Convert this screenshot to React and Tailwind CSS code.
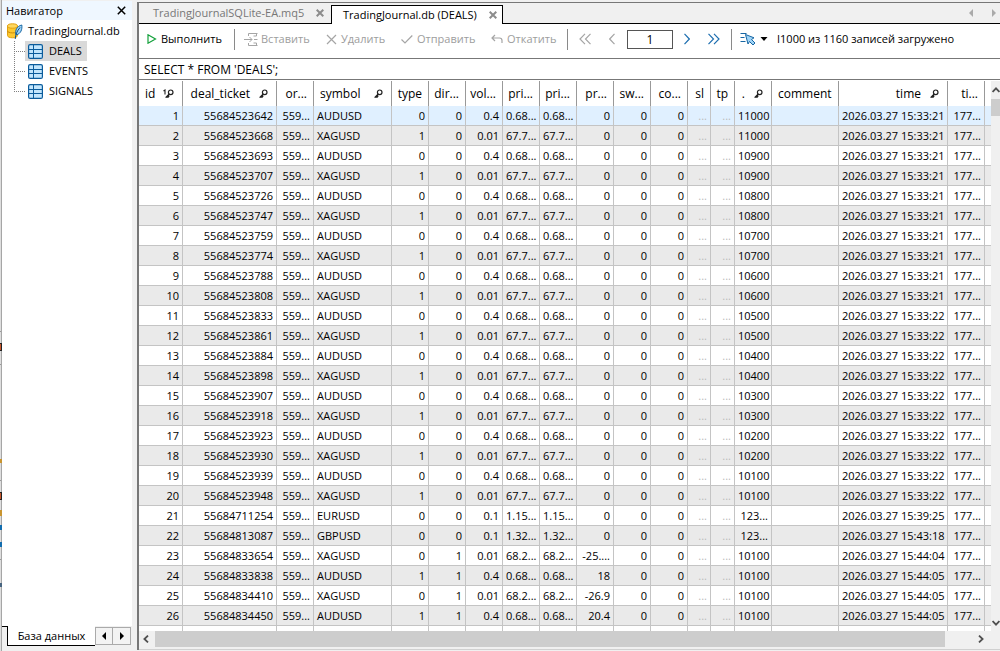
import {useState} from "react"

const TABLES = ["DEALS", "EVENTS", "SIGNALS"]

const COLUMNS = [
    {key: "id", label: "id", width: "w-[44px]", icon: "primary"},
    {key: "ticket", label: "deal_ticket", width: "w-[94px]", icon: "key"},
    {key: "order", label: "or...", width: "w-[37px]"},
    {key: "symbol", label: "symbol", width: "w-[78px]", icon: "key", left: true},
    {key: "type", label: "type", width: "w-[37px]"},
    {key: "direction", label: "dir...", width: "w-[37px]"},
    {key: "volume", label: "vol...", width: "w-[37px]"},
    {key: "priceOpen", label: "pri...", width: "w-[37px]"},
    {key: "priceClose", label: "pri...", width: "w-[37px]"},
    {key: "profit", label: "pr...", width: "w-[37px]"},
    {key: "swap", label: "sw...", width: "w-[37px]"},
    {key: "commission", label: "co...", width: "w-[37px]"},
    {key: "sl", label: "sl", width: "w-[23px]", muted: true},
    {key: "tp", label: "tp", width: "w-[24px]", muted: true},
    {key: "magic", label: ".", width: "w-[37px]", icon: "key"},
    {key: "comment", label: "comment", width: "w-[67px]", left: true},
    {key: "time", label: "time", width: "w-[109px]", icon: "key"},
    {key: "timeMsc", label: "ti...", width: "w-[37px]"},
]

// ticket, symbol, type, direction, volume, price, profit, magic, time
const DEALS = [
    ["55684523642", "AUDUSD", 0, 0, "0.4", "0.68...", "0", "11000", "15:33:21"],
    ["55684523668", "XAGUSD", 1, 0, "0.01", "67.7...", "0", "11000", "15:33:21"],
    ["55684523693", "AUDUSD", 0, 0, "0.4", "0.68...", "0", "10900", "15:33:21"],
    ["55684523707", "XAGUSD", 1, 0, "0.01", "67.7...", "0", "10900", "15:33:21"],
    ["55684523726", "AUDUSD", 0, 0, "0.4", "0.68...", "0", "10800", "15:33:21"],
    ["55684523747", "XAGUSD", 1, 0, "0.01", "67.7...", "0", "10800", "15:33:21"],
    ["55684523759", "AUDUSD", 0, 0, "0.4", "0.68...", "0", "10700", "15:33:21"],
    ["55684523774", "XAGUSD", 1, 0, "0.01", "67.7...", "0", "10700", "15:33:21"],
    ["55684523788", "AUDUSD", 0, 0, "0.4", "0.68...", "0", "10600", "15:33:21"],
    ["55684523808", "XAGUSD", 1, 0, "0.01", "67.7...", "0", "10600", "15:33:21"],
    ["55684523833", "AUDUSD", 0, 0, "0.4", "0.68...", "0", "10500", "15:33:22"],
    ["55684523861", "XAGUSD", 1, 0, "0.01", "67.7...", "0", "10500", "15:33:22"],
    ["55684523884", "AUDUSD", 0, 0, "0.4", "0.68...", "0", "10400", "15:33:22"],
    ["55684523898", "XAGUSD", 1, 0, "0.01", "67.7...", "0", "10400", "15:33:22"],
    ["55684523907", "AUDUSD", 0, 0, "0.4", "0.68...", "0", "10300", "15:33:22"],
    ["55684523918", "XAGUSD", 1, 0, "0.01", "67.7...", "0", "10300", "15:33:22"],
    ["55684523923", "AUDUSD", 0, 0, "0.4", "0.68...", "0", "10200", "15:33:22"],
    ["55684523930", "XAGUSD", 1, 0, "0.01", "67.7...", "0", "10200", "15:33:22"],
    ["55684523939", "AUDUSD", 0, 0, "0.4", "0.68...", "0", "10100", "15:33:22"],
    ["55684523948", "XAGUSD", 1, 0, "0.01", "67.7...", "0", "10100", "15:33:22"],
    ["55684711254", "EURUSD", 0, 0, "0.1", "1.15...", "0", "123...", "15:39:25"],
    ["55684813087", "GBPUSD", 0, 0, "0.1", "1.32...", "0", "123...", "15:43:18"],
    ["55684833654", "XAGUSD", 0, 1, "0.01", "68.2...", "-25....", "10100", "15:44:04"],
    ["55684833838", "AUDUSD", 1, 1, "0.4", "0.68...", "18", "10100", "15:44:05"],
    ["55684834410", "XAGUSD", 0, 1, "0.01", "68.2...", "-26.9", "10100", "15:44:05"],
    ["55684834450", "AUDUSD", 1, 1, "0.4", "0.68...", "20.4", "10100", "15:44:05"],
].map(([ticket, symbol, type, direction, volume, price, profit, magic, time], i) => ({
    id: i + 1,
    ticket,
    order: "559...",
    symbol,
    type,
    direction,
    volume,
    priceOpen: price,
    priceClose: price,
    profit,
    swap: 0,
    commission: 0,
    sl: "...",
    tp: "...",
    magic,
    comment: "",
    time: `2026.03.27 ${time}`,
    timeMsc: "177...",
}))

function KeyIcon({primary}) {
    return (
        <svg width={primary ? 11 : 9} height="10" viewBox={primary ? "-2 0 11 10" : "0 0 9 10"} fill="none" stroke="#222"
             className="shrink-0">
            {primary && <path d="M-1.5 2l1.5-1v4.5" strokeWidth="1.1"/>}
            <circle cx="5.7" cy="3.3" r="2.3" strokeWidth="1.2"/>
            <path d="M4.2 5L.6 8.6M1.2 8.2h2.6M3 6.2l1.4 1.3" strokeWidth="1.2"/>
        </svg>
    )
}

function TableIcon() {
    return (
        <svg width="15" height="15" viewBox="0 0 15 15" fill="none" stroke="#0b5c9c">
            <rect x=".6" y=".6" width="13.8" height="13.8" rx="1.5" fill="#c3e6fd" strokeWidth="1.2"/>
            <path d="M5.5 1v13M1 5.5h13M1 9.5h13" strokeWidth="1"/>
        </svg>
    )
}

function DatabaseIcon() {
    return (
        <svg width="16" height="17" viewBox="0 0 16 17" fill="none">
            <path d="M.5 3v9.5c0 1.4 2.2 2.3 5 2.3s5-.9 5-2.3V3z" fill="#fdc82f" stroke="#e0a010"/>
            <ellipse cx="5.5" cy="3" rx="5" ry="2.2" fill="#ffd75e" stroke="#e0a010"/>
            <path d="M.5 7.8c0 1.3 2.2 2.1 5 2.1s5-.8 5-2.1" stroke="#c98c0c"/>
            <path d="M8.8 11.5C8 7 10 3.2 14.8 2c.6 4.5-1 8.5-5 9.7z" fill="#9fd4f7" stroke="#1766a3"/>
            <path d="M8.2 16C8.5 11.5 10 8 13 4.5" stroke="#0b4f86"/>
        </svg>
    )
}

function TabClose() {
    return (
        <svg width="8" height="8" viewBox="0 0 8 8" stroke="#8c8c8c" strokeWidth="2">
            <path d="M.7.7l6.6 6.6M7.3.7L.7 7.3"/>
        </svg>
    )
}

function Chevron({double, flip, color}) {
    return (
        <svg width={double ? 12 : 6} height="12" viewBox={double ? "0 0 12 12" : "0 0 6 12"} fill="none" stroke={color}
             strokeWidth="1.2" className={flip ? "rotate-180" : ""}>
            <path d={double ? "M.5.8L5.5 6l-5 5.2M6 .8L11 6l-5 5.2" : "M.5.8L5.3 6 .5 11.2"}/>
        </svg>
    )
}

function Arrow({className = "", color = "#000"}) {
    return (
        <svg width="4" height="8" viewBox="0 0 4 8" fill={color} className={className}>
            <path d="M0 0l4 4-4 4z"/>
        </svg>
    )
}

function ScrollArrow({className}) {
    return (
        <svg width="6" height="8" viewBox="0 0 6 8" fill="none" stroke="#505050" strokeWidth="1.8" className={className}>
            <path d="M1 .6L4.6 4 1 7.4"/>
        </svg>
    )
}

function ToolButton({children, label, width, disabled}) {
    return (
        <button
            disabled={disabled}
            className={`flex shrink-0 items-center text-left ${width} ${disabled ? "text-[#9d9d9d]" : "text-black"}`}>
            {children}
            {label}
        </button>
    )
}

function Divider() {
    return <div className="h-[21px] w-px shrink-0 bg-[#8a8a8a]"/>
}

function Toolbar() {
    return (
        <div className="flex h-[35px] shrink-0 items-center overflow-hidden border-b border-[#777] pb-1 pl-2 whitespace-nowrap">
            <ToolButton label="Выполнить" width="w-[87px] gap-[3px]">
                <svg width="11" height="10" viewBox="0 0 11 10" fill="none" stroke="#12a03a" strokeWidth="1.2">
                    <path d="M1 .8L8.5 5 1 9.2z"/>
                </svg>
            </ToolButton>
            <Divider/>
            <ToolButton label="Вставить" width="ml-[9px] w-[82px] gap-[3px]" disabled>
                <svg width="14" height="13" viewBox="0 0 14 13" fill="none" stroke="#a5a5a5">
                    <path d="M0 6.5h8M5.5 4L8 6.5 5.5 9M4.5 3V.5h9M4.5 10v2.5h9M10 6.5h3.5M12.5.5v2.5h-3M12.5 12.5V10h-3"/>
                </svg>
            </ToolButton>
            <ToolButton label="Удалить" width="w-[75px] gap-[3px]" disabled>
                <svg width="12" height="11" viewBox="0 0 12 11" stroke="#a5a5a5" strokeWidth="1.2">
                    <path d="M1 1l9 9M10 1l-9 9"/>
                </svg>
            </ToolButton>
            <ToolButton label="Отправить" width="w-[90px] gap-1" disabled>
                <svg width="12" height="11" viewBox="0 0 12 11" fill="none" stroke="#a5a5a5" strokeWidth="1.2">
                    <path d="M.5 5.5L4 9l7.3-7.5"/>
                </svg>
            </ToolButton>
            <ToolButton label="Откатить" width="w-[76px] gap-1" disabled>
                <svg width="12" height="11" viewBox="0 0 12 11" fill="none" stroke="#a5a5a5" strokeWidth="1.2">
                    <path d="M4 1L1 4l3 3M1 4h7.5q2.5 0 2.5 2.5V9"/>
                </svg>
            </ToolButton>
            <Divider/>
            <button aria-label="Первая страница" className="ml-[11px]" disabled><Chevron double flip color="#a5a5a5"/></button>
            <button aria-label="Предыдущая страница" className="ml-[18px]" disabled><Chevron flip color="#a5a5a5"/></button>
            <input
                aria-label="Страница"
                defaultValue="1"
                className="ml-3 h-[19px] w-[46px] shrink-0 border border-[#555] text-center text-[12px] outline-none"/>
            <button aria-label="Следующая страница" className="ml-[11px]"><Chevron color="#1e6fb0"/></button>
            <button aria-label="Последняя страница" className="ml-[18px]"><Chevron double color="#1e6fb0"/></button>
            <div className="ml-[11px]"><Divider/></div>
            <button aria-label="Выборка" className="ml-2 flex shrink-0 items-center gap-1">
                <svg width="16" height="14" viewBox="0 0 16 14" fill="none" stroke="#1766a3">
                    <path d="M.5 1.5h6M.5 5.5h4M.5 9.5h5"/>
                    <path d="M5.5 2.5l8.5 3.3-2.5 1.7 3.5 3.5-2 2-3.5-3.5L8 12z" fill="#9fd4f7"/>
                </svg>
                <svg width="8" height="4" viewBox="0 0 8 4"><path d="M.5 0h7L4 4z"/></svg>
            </button>
            <span className="ml-[9px]">I1000 из 1160 записей загружено</span>
        </div>
    )
}

function Navigator({selected, onSelect}) {
    return (
        <aside className="flex w-[130px] shrink-0 flex-col">
            <div className="flex h-[19px] shrink-0 items-center justify-between bg-[#eff7ff] pr-[6px] pl-1">
                <span>Навигатор</span>
                <button aria-label="Закрыть">
                    <svg width="9" height="9" viewBox="0 0 9 9" stroke="#000" strokeWidth="1.5">
                        <path d="M.8.8l7.4 7.4M8.2.8L.8 8.2"/>
                    </svg>
                </button>
            </div>
            <div className="flex-1 bg-white pt-px">
                <div className="flex h-5 items-center gap-[5px] pl-[5px] whitespace-nowrap">
                    <DatabaseIcon/>
                    TradingJournal.db
                </div>
                <ul>
                    {TABLES.map((name, i) => (
                        <li key={name} className="flex h-5 pl-3">
                            <svg width="11" height="20" viewBox="0 0 11 20" stroke="#808080" strokeDasharray="1 1"
                                 className="shrink-0">
                                <path d={i === TABLES.length - 1 ? "M.5 0v10M0 10.5h11" : "M.5 0v20M0 10.5h11"}/>
                            </svg>
                            <button
                                onClick={() => onSelect(name)}
                                className={`flex items-center gap-[6px] pr-[5px] pl-[3px] ${selected === name ? "bg-[#d9d9d9]" : ""}`}>
                                <TableIcon/>
                                {name}
                            </button>
                        </li>
                    ))}
                </ul>
            </div>
            <div className="flex h-5 shrink-0 pr-px">
                <div className="h-px w-[5px] bg-black"/>
                <button className="flex-1 border-b border-l border-black bg-white whitespace-nowrap">База данных</button>
                <button aria-label="Назад" className="mt-px flex h-[18px] w-[18px] items-center justify-center border border-[#aaa] bg-[#f3f3f3]">
                    <Arrow className="rotate-180"/>
                </button>
                <button aria-label="Вперёд" className="mt-px flex h-[18px] w-[18px] items-center justify-center border border-l-0 border-[#aaa] bg-[#f3f3f3]">
                    <Arrow/>
                </button>
            </div>
            <div className="h-[5px] shrink-0"/>
        </aside>
    )
}

function DealsTable() {
    return (
        <table className="w-full table-fixed border-separate border-spacing-0 whitespace-nowrap">
            <colgroup>
                {COLUMNS.map((col) => <col key={col.key} className={col.width}/>)}
                <col/>
            </colgroup>
            <thead className="text-[12px]">
            <tr className="h-[25px]">
                {COLUMNS.map((col) => (
                    <th key={col.key} className="border-r border-[#999] p-0 font-normal">
                        <div
                            className={`flex items-center pl-[6px] ${col.left || col.icon === "primary" ? "justify-between" : "justify-end gap-[9px]"} ${col.icon ? "pr-2" : "pr-[6px]"}`}>
                            {col.label}
                            {col.icon && <KeyIcon primary={col.icon === "primary"}/>}
                        </div>
                    </th>
                ))}
                <th/>
            </tr>
            </thead>
            <tbody>
            {DEALS.map((deal, i) => (
                <tr key={deal.id}
                    className={`h-5 ${i === 0 ? "bg-[#e0f0ff]" : i % 2 ? "bg-[#eaeaea]" : "bg-white"}`}>
                    {COLUMNS.map((col) => (
                        <td
                            key={col.key}
                            className={`overflow-hidden border-r border-b border-[#c4c4c4] px-[3px] py-0 leading-[19px] ${col.left ? "text-left" : "text-right"} ${col.muted ? "text-[#bbb]" : ""}`}>
                            {deal[col.key]}
                        </td>
                    ))}
                    <td className="border-b border-[#c4c4c4] p-0"/>
                </tr>
            ))}
            <tr className="h-5">
                {COLUMNS.map((col) => <td key={col.key} className="border-r border-[#c4c4c4] p-0"/>)}
                <td/>
            </tr>
            </tbody>
        </table>
    )
}

export default function App() {
    const [selected, setSelected] = useState("DEALS")
    const [query, setQuery] = useState("SELECT * FROM 'DEALS';")

    return (
        <div className="flex h-screen overflow-hidden bg-[#f0f0f0] font-['Open_Sans','Noto_Sans',sans-serif] text-[11px] leading-4 text-black">
            <svg width="2" height="651" viewBox="0 0 2 651" className="shrink-0">
                <path d="M0 0h1v651H0z" fill="#dedede"/>
                <path d="M1 0h1v651H1z" fill="#a6a6a6"/>
                <path d="M0 331h1v1H0zM0 364h1v1H0zM0 480h1v1H0zM0 559h1v1H0z" fill="#999"/>
                <path d="M0 343h2v8H0zM0 492h2v8H0z" fill="#222"/>
                <path d="M0 344h1v6H0zM0 493h1v6H0z" fill="#c9582c"/>
                <path d="M0 459h2v4H0zM0 510h2v6H0z" fill="#c99530"/>
                <path d="M0 525h2v5H0zM0 542h2v5H0z" fill="#126daf"/>
                <path d="M0 583h2v4H0z" fill="#476480"/>
            </svg>
            <div className="flex pt-px">
                <Navigator selected={selected} onSelect={setSelected}/>
            </div>
            <main className="mt-[2px] mb-px ml-[5px] flex min-w-0 flex-1 flex-col border-t border-l-2 border-[#777]">
                <div className="flex h-[21px] shrink-0 items-stretch">
                    <div className="flex w-[192px] items-center justify-between border-b border-black pr-[7px] pl-[14px] text-[#777]">
                        <span className="whitespace-nowrap">TradingJournalSQLite-EA.mq5</span>
                        <button aria-label="Закрыть вкладку"><TabClose/></button>
                    </div>
                    <div className="mt-[2px] flex w-[172px] items-center justify-between border border-b-0 border-black bg-white pr-[5px] pl-[11px]">
                        <span className="whitespace-nowrap">TradingJournal.db (DEALS)</span>
                        <button aria-label="Закрыть вкладку"><TabClose/></button>
                    </div>
                    <div className="flex flex-1 items-center justify-end gap-[19px] border-b border-black pr-1">
                        <Arrow className="rotate-180" color="#aaa"/>
                        <Arrow color="#aaa"/>
                    </div>
                </div>
                <div className="flex min-h-0 flex-1 flex-col bg-white">
                    <Toolbar/>
                    <input
                        aria-label="SQL запрос"
                        value={query}
                        onChange={(e) => setQuery(e.target.value)}
                        className="mb-px h-[21px] w-full shrink-0 border-b border-[#777] px-[5px] text-[12px] outline-none"/>
                    <div className="flex min-h-0 flex-1">
                        <div className="flex min-w-0 flex-1 flex-col">
                            <div className="min-h-0 flex-1 overflow-hidden">
                                <DealsTable/>
                            </div>
                            <div className="flex h-4 shrink-0 items-center bg-[#f0f0f0] pr-[7px] pl-1">
                                <ScrollArrow className="rotate-180"/>
                                <div className="ml-[6px] h-full flex-1">
                                    <div className="h-full w-[96%] bg-[#cdcdcd]"/>
                                </div>
                                <ScrollArrow/>
                            </div>
                        </div>
                        <div className="flex w-[9px] shrink-0 flex-col items-center overflow-hidden bg-[#f0f0f0]">
                            <div className="flex h-[18px] items-center"><ScrollArrow className="-rotate-90"/></div>
                            <div className="h-[17px] w-full bg-[#cdcdcd]"/>
                            <ScrollArrow className="mt-auto mb-5 rotate-90"/>
                        </div>
                    </div>
                </div>
                <div className="h-[3px] shrink-0 border-b border-[#d0d0d0]"/>
            </main>
        </div>
    )
}
